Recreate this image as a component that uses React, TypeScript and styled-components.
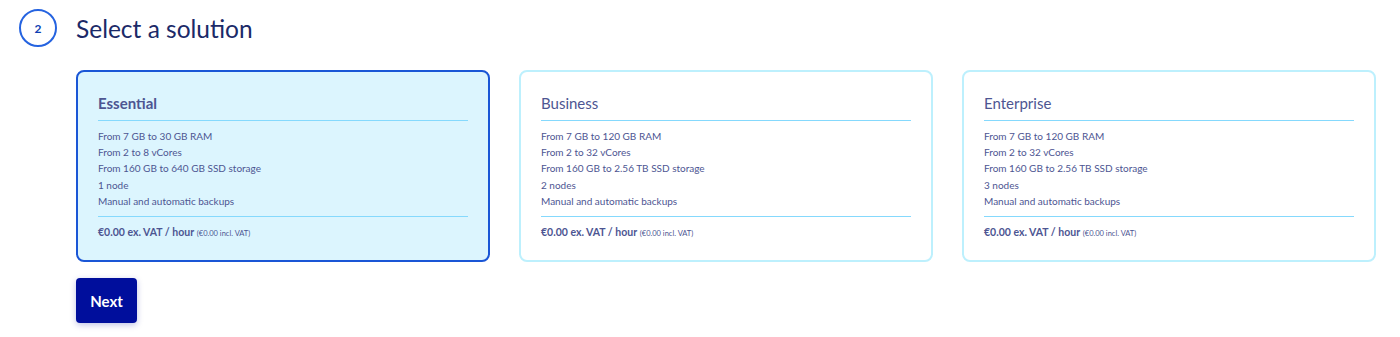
import styled, { createGlobalStyle } from "styled-components";

interface Plan {
  name: string;
  features: string[];
  price: string;
  priceTtc: string;
}

const plans: Plan[] = [
  {
    name: "Essential",
    features: [
      "From 7 GB to 30 GB RAM",
      "From 2 to 8 vCores",
      "From 160 GB to 640 GB SSD storage",
      "1 node",
      "Manual and automatic backups",
    ],
    price: "€0.00 ex. VAT / hour",
    priceTtc: "(€0.00 incl. VAT)",
  },
  {
    name: "Business",
    features: [
      "From 7 GB to 120 GB RAM",
      "From 2 to 32 vCores",
      "From 160 GB to 2.56 TB SSD storage",
      "2 nodes",
      "Manual and automatic backups",
    ],
    price: "€0.00 ex. VAT / hour",
    priceTtc: "(€0.00 incl. VAT)",
  },
  {
    name: "Enterprise",
    features: [
      "From 7 GB to 120 GB RAM",
      "From 2 to 32 vCores",
      "From 160 GB to 2.56 TB SSD storage",
      "3 nodes",
      "Manual and automatic backups",
    ],
    price: "€0.00 ex. VAT / hour",
    priceTtc: "(€0.00 incl. VAT)",
  },
];

const GlobalStyle = createGlobalStyle`
  body {
    margin: 0;
    background: #ffffff;
    font-family: Lato, "Liberation Sans", sans-serif;
  }
`;

const App = () => {
  const selected = 0;

  return (
    <>
      <GlobalStyle />
      <Step>
        <StepHeader>
          <StepNumber>2</StepNumber>
          <StepTitle>Select a solution</StepTitle>
        </StepHeader>
        <StepBody>
          <PlanGrid>
            {plans.map((plan, index) => (
              <PlanCard key={plan.name} $selected={index === selected}>
                <PlanName $selected={index === selected}>{plan.name}</PlanName>
                <Divider />
                <FeatureList>
                  {plan.features.map((feature) => (
                    <li key={feature}>{feature}</li>
                  ))}
                </FeatureList>
                <Divider />
                <Price>
                  <strong>{plan.price}</strong> <small>{plan.priceTtc}</small>
                </Price>
              </PlanCard>
            ))}
          </PlanGrid>
          <NextButton type="button">Next</NextButton>
        </StepBody>
      </Step>
    </>
  );
};

const Step = styled.section`
  padding: 9px 24px 14px 19px;
`;

const StepHeader = styled.div`
  display: flex;
  align-items: center;
  gap: 19px;
`;

const StepNumber = styled.div`
  box-sizing: border-box;
  width: 38px;
  height: 38px;
  border: 2px solid #2563e0;
  border-radius: 50%;
  display: flex;
  align-items: center;
  justify-content: center;
  color: #0d3fb3;
  font-size: 12px;
  font-weight: 700;
`;

const StepTitle = styled.h2`
  margin: 0;
  font-size: 24.5px;
  font-weight: 400;
  color: #1b2a68;
`;

const StepBody = styled.div`
  padding-left: 57px;
  margin-top: 23px;
`;

const PlanGrid = styled.div`
  display: grid;
  grid-template-columns: repeat(3, 414px);
  gap: 29px;
`;

const PlanCard = styled.div<{ $selected: boolean }>`
  box-sizing: border-box;
  height: 192px;
  padding: 21px 20px 0 20px;
  border: 2px solid ${(p) => (p.$selected ? "#1a56d6" : "#bdf0fd")};
  border-radius: 8px;
  background: ${(p) => (p.$selected ? "#dcf5fe" : "#ffffff")};
  color: #4d5592;
`;

const PlanName = styled.h3<{ $selected: boolean }>`
  margin: 0;
  font-size: 15px;
  line-height: 20px;
  font-weight: ${(p) => (p.$selected ? 700 : 400)};
  color: #4d5592;
`;

const Divider = styled.hr`
  margin: 7px 0 7px;
  border: 0;
  border-top: 1px solid #85d9fd;
`;

const FeatureList = styled.ul`
  margin: 0;
  padding: 0;
  list-style: none;
  font-size: 10px;
  line-height: 16.2px;
`;

const Price = styled.p`
  margin: 0;
  font-size: 10.5px;
  line-height: 16px;

  strong {
    font-weight: 700;
  }

  small {
    font-size: 7.5px;
  }
`;

const NextButton = styled.button`
  margin-top: 16px;
  width: 61px;
  height: 45px;
  border: 0;
  border-radius: 4px;
  background: #000e9c;
  color: #ffffff;
  font-family: inherit;
  font-size: 15px;
  font-weight: 700;
  box-shadow: 0 2px 6px rgba(0, 14, 156, 0.25);
  cursor: pointer;
`;

export default App;
